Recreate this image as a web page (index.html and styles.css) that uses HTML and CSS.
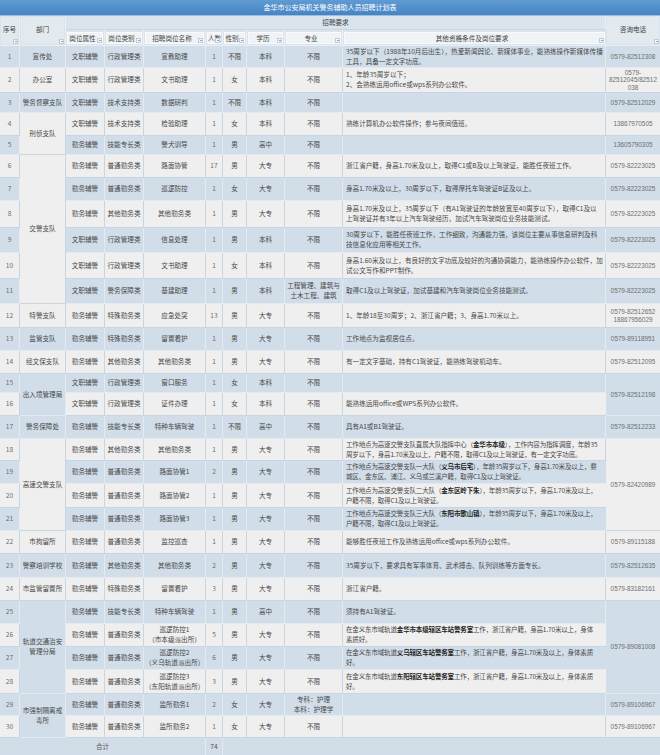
FILE: index.html
```html
<!DOCTYPE html>
<html lang="zh-CN">
<head>
<meta charset="utf-8">
<title>金华市公安局机关警务辅助人员招聘计划表</title>
<link rel="stylesheet" href="styles.css">
</head>
<body>
<div class="title">金华市公安局机关警务辅助人员招聘计划表</div>
<table class="grid">
<colgroup>
<col class="c1"><col class="c2"><col class="c3"><col class="c4"><col class="c5"><col class="c6"><col class="c7"><col class="c8"><col class="c9"><col class="c10"><col class="c11">
</colgroup>
<thead>
<tr class="hA">
<th rowspan="2" class="hs"><div class="hc">序号<span class="ar"></span></div></th>
<th rowspan="2" class="hs"><div class="hc">部门<span class="ar"></span></div></th>
<th colspan="8" class="req">招聘要求</th>
<th rowspan="2" class="hs"><div class="hc">咨询电话<span class="ar"></span></div></th>
</tr>
<tr class="hB">
<th><div class="hbox">岗位属性<span class="ar"></span></div></th>
<th><div class="hbox">岗位类别<span class="ar"></span></div></th>
<th><div class="hbox">招聘岗位名称<span class="ar"></span></div></th>
<th><div class="hbox">人数<span class="ar"></span></div></th>
<th><div class="hbox">性别<span class="ar"></span></div></th>
<th><div class="hbox">学历<span class="ar"></span></div></th>
<th><div class="hbox">专业<span class="ar"></span></div></th>
<th><div class="hbox">其他资格条件及岗位要求<span class="ar"></span></div></th>
</tr>
</thead>
<tbody>
<tr class="b h22"><td class="n">1</td><td>宣传处</td><td>文职辅警</td><td>行政管理类</td><td>宣教助理</td><td class="n">1</td><td>不限</td><td>本科</td><td>不限</td><td class="t">35周岁以下（1988年10月后出生），热爱新闻舆论、新媒体事业，能熟练操作新媒体传播工具，具备一定文字功底。</td><td class="ph">0579-82512308</td></tr>
<tr class="g h25"><td class="n">2</td><td>办公室</td><td>文职辅警</td><td>行政管理类</td><td>文书助理</td><td class="n">1</td><td>女</td><td>本科</td><td>不限</td><td class="t">1、年龄35周岁以下；<br>2、会熟练运用office或wps系列办公软件。</td><td class="ph">0579-<br>82512045/82512<br>038</td></tr>
<tr class="b h20"><td class="n">3</td><td>警务督察支队</td><td>文职辅警</td><td>技术支持类</td><td>数据研判</td><td class="n">1</td><td>不限</td><td>本科</td><td>不限</td><td class="t"></td><td class="ph">0579-82512029</td></tr>
<tr class="g h23"><td class="n">4</td><td rowspan="2">刑侦支队</td><td>文职辅警</td><td>技术支持类</td><td>检验助理</td><td class="n">1</td><td>女</td><td>本科</td><td>不限</td><td class="t">熟练计算机办公软件操作；参与夜间值班。</td><td class="ph">13867970505</td></tr>
<tr class="b h19"><td class="n">5</td><td>勤务辅警</td><td>技能专长类</td><td>警犬训导</td><td class="n">1</td><td>男</td><td>高中</td><td>不限</td><td class="t"></td><td class="ph">13605790305</td></tr>
<tr class="g h23"><td class="n">6</td><td rowspan="6">交警支队</td><td>勤务辅警</td><td>普通勤务类</td><td>路面协管</td><td class="n">17</td><td>男</td><td>大专</td><td>不限</td><td class="t">浙江省户籍，身高1.70米及以上，取得C1或B及以上驾驶证，能胜任夜班工作。</td><td class="ph">0579-82223025</td></tr>
<tr class="b h23"><td class="n">7</td><td>勤务辅警</td><td>普通勤务类</td><td>巡逻防控</td><td class="n">1</td><td>女</td><td>大专</td><td>不限</td><td class="t">身高1.70米及以上，30周岁以下，取得摩托车驾驶证B证及以上。</td><td class="ph">0579-82223025</td></tr>
<tr class="g h27"><td class="n">8</td><td>勤务辅警</td><td>其他勤务类</td><td>其他勤务类</td><td class="n">1</td><td>男</td><td>大专</td><td>不限</td><td class="t">身高1.70米及以上，35周岁以下（有A1驾驶证的年龄放宽至40周岁以下），取得C1及以上驾驶证并有3年以上汽车驾驶经历，加试汽车驾驶岗位业务技能测试。</td><td class="ph">0579-82223025</td></tr>
<tr class="b h25"><td class="n">9</td><td>文职辅警</td><td>行政管理类</td><td>信息处理</td><td class="n">1</td><td>男</td><td>本科</td><td>不限</td><td class="t">30周岁以下，能胜任夜班工作，工作细致，沟通能力强，该岗位主要从事信息研判及科技信息化应用等相关工作。</td><td class="ph">0579-82223025</td></tr>
<tr class="g h26"><td class="n">10</td><td>文职辅警</td><td>行政管理类</td><td>文书助理</td><td class="n">1</td><td>女</td><td>本科</td><td>不限</td><td class="t">身高1.60米及以上，有良好的文字功底及较好的沟通协调能力，能熟练操作办公软件，加试公文写作和PPT制作。</td><td class="ph">0579-82223025</td></tr>
<tr class="b h25"><td class="n">11</td><td>文职辅警</td><td>警务保障类</td><td>基建助理</td><td class="n">1</td><td>男</td><td>本科</td><td class="two">工程管理、建筑与土木工程、建筑</td><td class="t">取得C1及以上驾驶证，加试基建和汽车驾驶岗位业务技能测试。</td><td class="ph">0579-82223025</td></tr>
<tr class="g h24"><td class="n">12</td><td>特警支队</td><td>勤务辅警</td><td>特殊勤务类</td><td>应急处突</td><td class="n">13</td><td>男</td><td>大专</td><td>不限</td><td class="t">1、年龄18至30周岁；2、浙江省户籍；3、身高1.70米以上。</td><td class="ph">0579-82512652<br>18867956029</td></tr>
<tr class="b h23"><td class="n">13</td><td>监管支队</td><td>勤务辅警</td><td>特殊勤务类</td><td>留置看护</td><td class="n">1</td><td>男</td><td>大专</td><td>不限</td><td class="t">工作地点为监视居住点。</td><td class="ph">0579-89118951</td></tr>
<tr class="g h23"><td class="n">14</td><td>经文保支队</td><td>勤务辅警</td><td>其他勤务类</td><td>其他勤务类</td><td class="n">1</td><td>男</td><td>大专</td><td>不限</td><td class="t">有一定文字基础，持有C1驾驶证，能熟练驾驶机动车。</td><td class="ph">0579-82512095</td></tr>
<tr class="b h19"><td class="n">15</td><td rowspan="2">出入境管理局</td><td>文职辅警</td><td>行政管理类</td><td>窗口服务</td><td class="n">1</td><td>女</td><td>本科</td><td>不限</td><td class="t"></td><td class="ph" rowspan="2">0579-82512198</td></tr>
<tr class="g h23"><td class="n">16</td><td>文职辅警</td><td>行政管理类</td><td>证件办理</td><td class="n">1</td><td>女</td><td>本科</td><td>不限</td><td class="t">能熟练运用office或WPS系列办公软件。</td></tr>
<tr class="b h23"><td class="n">17</td><td>警务保障处</td><td>勤务辅警</td><td>技能专长类</td><td>特种车辆驾驶</td><td class="n">1</td><td>不限</td><td>高中</td><td>不限</td><td class="t">具有A1或B1驾驶证。</td><td class="ph">0579-82512233</td></tr>
<tr class="g h22"><td class="n">18</td><td rowspan="4">高速交警支队</td><td>勤务辅警</td><td>其他勤务类</td><td>其他勤务类</td><td class="n">1</td><td>男</td><td>大专</td><td>不限</td><td class="t nw">工作地点为高速交警支队直属大队指挥中心（<b>金华市本级</b>），工作内容为指挥调度，年龄35<br>周岁以下，身高1.70米及以上，户籍不限，取得C1及以上驾驶证，有一定文字功底。</td><td class="ph" rowspan="4">0579-82420989</td></tr>
<tr class="b h23"><td class="n">19</td><td>勤务辅警</td><td>普通勤务类</td><td>路面协管1</td><td class="n">2</td><td>男</td><td>大专</td><td>不限</td><td class="t nw">工作地点为高速交警支队一大队（<b>义乌市后宅</b>），年龄35周岁以下，身高1.70米及以上，婺<br>城区、金东区、浦江、义乌或兰溪户籍，取得C1及以上驾驶证。</td></tr>
<tr class="g h24"><td class="n">20</td><td>勤务辅警</td><td>普通勤务类</td><td>路面协管2</td><td class="n">1</td><td>男</td><td>大专</td><td>不限</td><td class="t nw">工作地点为高速交警支队二大队（<b>金东区岭下朱</b>），年龄35周岁以下，身高1.70米及以上，<br>户籍不限，取得C1及以上驾驶证。</td></tr>
<tr class="b h23"><td class="n">21</td><td>勤务辅警</td><td>普通勤务类</td><td>路面协管3</td><td class="n">1</td><td>男</td><td>大专</td><td>不限</td><td class="t nw">工作地点为高速交警支队三大队（<b>东阳市歌山镇</b>），年龄35周岁以下，身高1.70米及以上，<br>户籍不限，取得C1及以上驾驶证。</td></tr>
<tr class="g h23"><td class="n">22</td><td>市拘留所</td><td>勤务辅警</td><td>普通勤务类</td><td>监控巡查</td><td class="n">1</td><td>男</td><td>大专</td><td>不限</td><td class="t">能够胜任夜班工作及熟练运用office或wps系列办公软件。</td><td class="ph">0579-89115188</td></tr>
<tr class="b h24"><td class="n">23</td><td>警察培训学校</td><td>勤务辅警</td><td>其他勤务类</td><td>其他勤务类</td><td class="n">2</td><td>男</td><td>大专</td><td>不限</td><td class="t">35周岁以下，要求具有军事体育、武术搏击、队列训练等方面专长。</td><td class="ph">0579-82512635</td></tr>
<tr class="g h23"><td class="n">24</td><td>市监管留置所</td><td>勤务辅警</td><td>特殊勤务类</td><td>留置看护</td><td class="n">3</td><td>男</td><td>大专</td><td>不限</td><td class="t">浙江省户籍。</td><td class="ph">0579-83182161</td></tr>
<tr class="b h23"><td class="n">25</td><td rowspan="4" class="two">轨道交通治安<br>管理分局</td><td>勤务辅警</td><td>技能专长类</td><td>特种车辆驾驶</td><td class="n">1</td><td>男</td><td>高中</td><td>不限</td><td class="t">须持有A1驾驶证。</td><td class="ph" rowspan="4">0579-89081008</td></tr>
<tr class="g h23"><td class="n">26</td><td>勤务辅警</td><td>普通勤务类</td><td class="two">巡逻防控1<br>（市本级派出所）</td><td class="n">5</td><td>男</td><td>大专</td><td>不限</td><td class="t nw">在金义东市域轨道<b>金华市本级辖区车站警务室</b>工作，浙江省户籍，身高1.70米以上，身体<br>素质好。</td></tr>
<tr class="b h23"><td class="n">27</td><td>勤务辅警</td><td>普通勤务类</td><td class="two">巡逻防控2<br>（义乌轨道派出所）</td><td class="n">6</td><td>男</td><td>大专</td><td>不限</td><td class="t nw">在金义东市域轨道<b>义乌辖区车站警务室</b>工作，浙江省户籍，身高1.70米及以上，身体素质<br>好。</td></tr>
<tr class="g h24"><td class="n">28</td><td>勤务辅警</td><td>普通勤务类</td><td class="two">巡逻防控3<br>（东阳轨道派出所）</td><td class="n">3</td><td>男</td><td>大专</td><td>不限</td><td class="t nw">在金义东市域轨道<b>东阳辖区车站警务室</b>工作，浙江省户籍，身高1.70米及以上，身体素质<br>好。</td></tr>
<tr class="b h22"><td class="n">29</td><td rowspan="2" class="two">市强制隔离戒<br>毒所</td><td>勤务辅警</td><td>普通勤务类</td><td>监所勤务1</td><td class="n">2</td><td>女</td><td>大专</td><td class="two">专科：护理<br>本科：护理学</td><td class="t"></td><td class="ph">0579-89106967</td></tr>
<tr class="g h22"><td class="n">30</td><td>勤务辅警</td><td>普通勤务类</td><td>监所勤务2</td><td class="n">1</td><td>女</td><td>大专</td><td>不限</td><td class="t"></td><td class="ph">0579-89106967</td></tr>
<tr class="b h18 total"><td colspan="5">合计</td><td class="n">74</td><td colspan="5"></td></tr>
</tbody>
</table>
</body>
</html>
```

FILE: styles.css
```css
* { box-sizing: border-box; }
html, body { margin: 0; padding: 0; }
body {
  width: 660px;
  height: 755px;
  overflow: hidden;
  background: #d6e1eb;
  font-family: "Noto Sans CJK SC", "Noto Sans", sans-serif;
  font-size: 6.6px;
  color: #484848;
}
.title {
  height: 16px;
  line-height: 15px;
  background: linear-gradient(#609bd2, #4584c4);
  border-bottom: 1px solid #9fbfdf;
  color: #fff;
  text-align: center;
  font-size: 7px;
}
.grid {
  width: 660px;
  table-layout: fixed;
  border-collapse: separate;
  border-spacing: 0;
}
.c1 { width: 20px; } .c2 { width: 46px; } .c3 { width: 39px; } .c4 { width: 39px; }
.c5 { width: 62px; } .c6 { width: 17px; } .c7 { width: 24px; } .c8 { width: 38px; }
.c9 { width: 58px; } .c10 { width: 263px; } .c11 { width: 54px; }

th, td {
  padding: 0 1px;
  text-align: center;
  vertical-align: middle;
  font-weight: normal;
  line-height: 9.6px;
  border-right: 1px solid;
  border-bottom: 1px solid;
  overflow: hidden;
  word-break: break-all;
}
th:last-child, td:last-child { border-right: 0; }

/* header */
thead th { background: #dae4ec; border-color: #e9eff4; color: #444; }
.hA { height: 14px; }
.hB { height: 15px; }
.hs { padding: 1px; }
.hc {
  position: relative;
  height: 27px;
  line-height: 24px;
  background: #e2e9ef;
}
.req { border-bottom-color: #c9d6e2; line-height: 13px; }
.hB th { padding: 1px; }
.hbox {
  position: relative;
  height: 12px;
  line-height: 11px;
  background: #eff3f6;
  border: 1px solid #f8fafb;
  padding-right: 5px;
  white-space: nowrap;
}
.ar {
  position: absolute;
  right: 0;
  bottom: 0;
  width: 5px;
  height: 5px;
  background: #f6f7f8;
  border: 1px solid #c3ccd5;
}
.ar::after {
  content: "";
  position: absolute;
  left: 0.5px;
  top: 1px;
  border-left: 1.5px solid transparent;
  border-right: 1.5px solid transparent;
  border-top: 1.5px solid #555;
}

/* body rows */
tr.b td { background: #d1dde8; border-color: #e3eaf0; }
tr.g td { background: #efefef; border-color: #c8d6e2; }
.h18 { height: 18px; } .h19 { height: 19px; } .h20 { height: 20px; }
.h22 { height: 22px; } .h23 { height: 23px; } .h24 { height: 24px; }
.h25 { height: 25px; } .h26 { height: 26px; } .h27 { height: 27px; }

td.n { color: #6d6d6d; }
td.two { line-height: 9.6px; }
td.t { text-align: left; padding: 0 2px 0 3px; line-height: 9.6px; }
td.t.nw { white-space: nowrap; font-size: 6.5px; letter-spacing: -0.15px; }
td.ph {
  color: #6f6f6f;
  font-family: "Liberation Sans", "Noto Sans CJK SC", sans-serif;
  font-size: 6.4px;
  line-height: 7.5px;
  padding: 0;
}
b { font-weight: 700; color: #1e1e1e; }
.total td { color: #555; }
```
